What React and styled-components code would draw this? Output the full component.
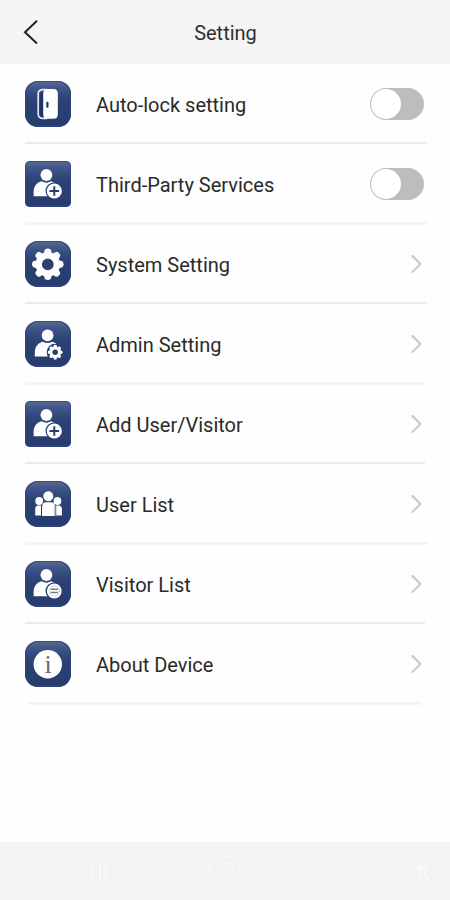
import React from 'react';
import styled, { createGlobalStyle } from 'styled-components';

const rows = [
    { title: 'Auto-lock setting', icon: 'door', toggle: true, lineEnd: 23 },
    { title: 'Third-Party Services', icon: 'add', toggle: true, square: true, thick: true, lineEnd: 23 },
    { title: 'System Setting', icon: 'gear', lineEnd: 23 },
    { title: 'Admin Setting', icon: 'admin', thick: true, lineEnd: 25 },
    { title: 'Add User/Visitor', icon: 'add', square: true, lineEnd: 25 },
    { title: 'User List', icon: 'users', thick: true, lineEnd: 22 },
    { title: 'Visitor List', icon: 'visitor', lineEnd: 25 },
    { title: 'About Device', icon: 'info', thick: true, lineStart: 28, lineEnd: 29 },
];

export default function App() {
    return (
        <>
            <GlobalStyle />
            <Screen>
                <Header>
                    <BackButton aria-label="Back">
                        <svg width="16" height="26" viewBox="0 0 16 26">
                            <path d="M14 1.8 L2 13.3 L14 24.4" fill="none" stroke="#202020" strokeWidth="2" />
                        </svg>
                    </BackButton>
                    <Title>Setting</Title>
                </Header>
                <List>
                    {rows.map(row => (
                        <Item key={row.title}>
                            <ItemBody>
                                <Tile $square={row.square}>{icons[row.icon]}</Tile>
                                <Label>{row.title}</Label>
                                {row.toggle ? <Switch role="switch" aria-checked="false"><Knob /></Switch> : <Chevron />}
                            </ItemBody>
                            <Line $thick={row.thick} $start={row.lineStart} $end={row.lineEnd} />
                        </Item>
                    ))}
                </List>
                <NavBar>
                    <NavIcons />
                </NavBar>
            </Screen>
        </>
    );
}

function Chevron() {
    return (
        <ChevronIcon viewBox="0 0 14 20">
            <path d="M1.8 1.2 L10.5 10 L1.8 18.6" fill="none" stroke="#c6c6c6" strokeWidth="2" />
        </ChevronIcon>
    );
}

function Person() {
    return (
        <g fill="#fff">
            <circle cx="21.4" cy="14" r="5.9" />
            <path d="M8.6 35.2 V31.5 C8.6 25 12 21.3 16.8 20.3 Q21.4 23 26 20.3 Q29.5 21 31.5 23.5 V35.2 Z" />
        </g>
    );
}

// eight rounded teeth around a ring
function Gear({ x, y, scale = 1 }) {
    return (
        <g transform={`translate(${x} ${y}) scale(${scale})`}>
            {[0, 45, 90, 135, 180, 225, 270, 315].map(angle => (
                <path key={angle} transform={`rotate(${angle})`} d="M-4 -10 L-3.2 -14 Q-2.8 -15.8 0 -15.8 Q2.8 -15.8 3.2 -14 L4 -10 Z" fill="#fff" />
            ))}
            <circle r="9.1" fill="none" stroke="#fff" strokeWidth="6.4" />
        </g>
    );
}

const icons = {
    door: (
        <svg viewBox="0 0 46 46">
            <path d="M22 8.6 H17.5 Q13.2 8.8 13.2 13 V33 Q13.2 37.2 17.5 37.4 H22" fill="none" stroke="#e9edf6" strokeWidth="1.6" />
            <path d="M18.5 10.5 Q15.4 11 15.4 13.5 V32.5 Q15.4 35 18.5 35.5 Z" fill="#1c3064" />
            <path d="M18.2 12.5 Q18.4 8 22.5 8 H28.5 Q32.8 8 32.8 12.5 V33.3 Q32.8 37.8 28.5 37.8 H22.5 Q18.4 37.8 18.2 33.3 Z" fill="#fff" />
            <rect x="21.3" y="20.7" width="2.2" height="6" rx="1" fill="#203565" />
        </svg>
    ),
    add: (
        <svg viewBox="0 0 46 46">
            <Person />
            <circle cx="29.3" cy="30" r="8.8" fill="#2a3f72" />
            <circle cx="29.3" cy="30" r="7.6" fill="#fff" />
            <path d="M29.3 25.2 V34.8 M24.5 30 H34.1" stroke="#263c70" strokeWidth="2" />
        </svg>
    ),
    gear: (
        <svg viewBox="0 0 46 46">
            <Gear x={22.8} y={23.3} />
        </svg>
    ),
    admin: (
        <svg viewBox="0 0 46 46">
            <g transform="translate(1.2 .4)"><Person /></g>
            <circle cx="30.2" cy="31.2" r="8.5" fill="#283e71" />
            <Gear x={30.2} y={31.2} scale={0.47} />
        </svg>
    ),
    users: (
        <svg viewBox="0 0 46 46">
            <g fill="#fff">
                <circle cx="14.2" cy="20" r="3.9" />
                <circle cx="32.4" cy="20" r="3.9" />
                <path d="M10.2 34.5 V28.5 Q10.2 24.8 13 24.5 H16 V34.5 Z" />
                <path d="M31.2 34.5 V24.5 H34 Q36.9 24.8 36.9 28.5 V34.5 Z" />
                <circle cx="23.3" cy="15.2" r="5.4" stroke="#2d4376" strokeWidth=".8" />
                <path d="M17 35 V26.5 Q17 21.3 21 21.3 H25.8 Q30.2 21.3 30.2 26.5 V35 Z" />
            </g>
            <path d="M29.6 25 V34.8" stroke="#c9cad0" strokeWidth="1.6" />
        </svg>
    ),
    visitor: (
        <svg viewBox="0 0 46 46">
            <Person />
            <circle cx="29.3" cy="30" r="8.8" fill="#2a3f72" />
            <circle cx="29.3" cy="30" r="7.4" fill="#fff" />
            <circle cx="29.3" cy="30" r="5.2" fill="none" stroke="#c5cad8" strokeWidth=".8" />
            <path d="M25.6 28.2 H33 M25.6 31.6 H33" stroke="#6d7896" strokeWidth="1.5" />
        </svg>
    ),
    info: (
        <svg viewBox="0 0 46 46">
            <circle cx="22.8" cy="23.3" r="14.2" fill="#fff" />
            <text x="23" y="31.8" textAnchor="middle" fontFamily="'Liberation Serif', serif" fontSize="26" fill="#666b74">i</text>
        </svg>
    ),
};

// barely visible system navigation glyphs
function NavIcons() {
    return (
        <NavSvg viewBox="0 0 450 58" fill="none" strokeWidth="1">
            <g stroke="#efefef">
                <path d="M89.5 21 V38 M97.5 20 V38 M102.5 18 V39 M109.5 19 V35" />
                <circle cx="225.5" cy="28.5" r="11.5" />
                <path d="M358 19 L348 28 L358 38" />
                <path d="M413 38 L418 29 L411 25 M434 25 L427 29 L431 38" />
            </g>
            <g stroke="#f9f9f9">
                <path d="M91.5 21 V38 M99.5 20 V38 M105.5 19 V38" />
                <rect x="217.5" y="20.5" width="16" height="16" rx="6" />
                <path d="M346 19 L351 24 M354 33 L359 39" />
                <circle cx="422.5" cy="19.5" r="2" />
                <path d="M414 24 L420 25.5 H425 L431 24 M420 26 V31 L417 38 M425 26 V31 L428 38" strokeWidth="1.8" />
            </g>
        </NavSvg>
    );
}

const GlobalStyle = createGlobalStyle`
    * { box-sizing: border-box; }
    body {
        margin: 0;
        background: #fefefe;
        font-family: Roboto, "Liberation Sans", sans-serif;
    }
`;

const Screen = styled.div`
    display: flex;
    flex-direction: column;
    width: 450px;
    height: 900px;
    overflow: hidden;
`;

const Header = styled.header`
    display: grid;
    grid-template-columns: 60px 1fr 60px;
    align-items: center;
    height: 64px;
    background: #f5f5f5;
`;

const BackButton = styled.button`
    display: flex;
    padding: 0 0 1px 23px;
    border: 0;
    background: none;
`;

const Title = styled.h1`
    margin: 0;
    padding: 1px 0 0 1px;
    text-align: center;
    font-size: 20px;
    font-weight: 400;
    line-height: 24px;
    color: #303030;
`;

const List = styled.main`
    flex: 1;
`;

const Item = styled.div`
    display: flex;
    flex-direction: column;
    height: 80px;
`;

const ItemBody = styled.div`
    display: flex;
    flex: 1;
    align-items: center;
    padding: 2px 26px 0 25px;
`;

const Tile = styled.div`
    width: 46px;
    height: 46px;
    margin-right: 25px;
    border-radius: ${(props) => props.$square ? '5px' : '13px'};
    background: linear-gradient(#5f7196 0, #43578a 6px, #31477b 15px, #2a4073 24px, #273d70 100%);
    box-shadow: inset 0 0 1px 1px #33487a;
    svg {
        display: block;
        width: 46px;
        height: 46px;
    }
`;

const Label = styled.span`
    flex: 1;
    padding-top: 2px;
    font-size: 20px;
    line-height: 24px;
    color: #2a2a2a;
`;

const Switch = styled.div`
    width: 54px;
    height: 32px;
    padding: 1px;
    border-radius: 16px;
    background: #bdbdbd;
`;

const Knob = styled.div`
    width: 30px;
    height: 30px;
    border-radius: 50%;
    background: #fff;
`;

const ChevronIcon = styled.svg`
    width: 14px;
    height: 20px;
`;

const Line = styled.div`
    height: ${(props) => props.$thick ? '3px' : '2px'};
    margin: 0 ${(props) => props.$end}px ${(props) => props.$thick ? '-1px' : '0'} ${(props) => props.$start || 25}px;
    background: ${(props) => props.$thick ? '#f4f4f4' : '#ebebeb'};
`;

const NavBar = styled.footer`
    height: 58px;
    background: #f4f4f4;
`;

const NavSvg = styled.svg`
    display: block;
    width: 450px;
    height: 58px;
`;
